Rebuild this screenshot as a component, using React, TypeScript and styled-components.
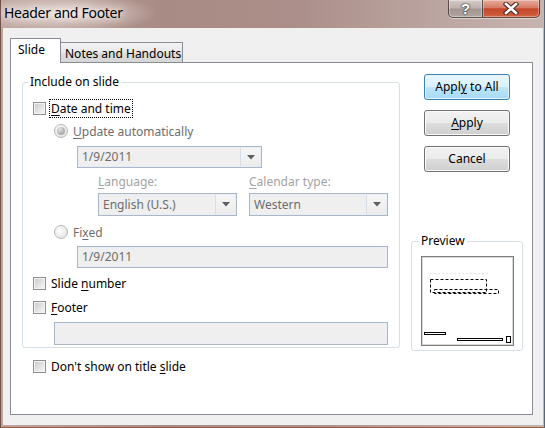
import React from 'react'
import styled, { createGlobalStyle } from 'styled-components'

const GlobalStyle = createGlobalStyle`
  html, body {
    margin: 0;
    padding: 0;
  }
  body {
    background: #fff;
    font-family: "Noto Sans", "Liberation Sans", sans-serif;
    font-size: 12px;
    color: #000;
  }
`

const Window = styled.div`
  width: 545px;
  height: 428px;
  box-sizing: border-box;
  display: flex;
  flex-direction: column;
  padding: 0 2px 3px 3px;
  overflow: hidden;
  background:
    radial-gradient(ellipse 95px 20px at 62px 13px, rgba(238, 228, 224, 0.95), rgba(238, 228, 224, 0)),
    linear-gradient(90deg, #bda49e 0%, #a98b85 30%, #ac8f8a 55%, #bba5a0 80%, #c6b4b0 100%);
  box-shadow: inset 1px 0 #6f5046, inset -1px 0 #566877, inset 0 -1px #9a5a3c;
`

const TitleBar = styled.div`
  height: 28px;
  display: flex;
  justify-content: space-between;
  align-items: flex-start;
  flex-shrink: 0;
`

const Title = styled.div`
  padding: 3px 0 0 1px;
  font-size: 14px;
  line-height: 20px;
  letter-spacing: -0.3px;
  color: #000;
  text-shadow: 0 0 6px rgba(255, 255, 255, 0.9), 0 0 10px rgba(255, 255, 255, 0.7);
`

const CaptionButtons = styled.div`
  display: flex;
  margin-right: 3px;
  border-radius: 0 0 5px 5px;
  box-shadow: 0 1px 0 rgba(255, 255, 255, 0.45);
`

const CaptionButton = styled.div<{ $close?: boolean }>`
  height: 18px;
  width: ${p => (p.$close ? 57 : 35)}px;
  box-sizing: border-box;
  display: flex;
  align-items: center;
  justify-content: center;
  border: 1px solid rgba(58, 40, 38, 0.75);
  border-top: none;
  border-left: ${p => (p.$close ? 'none' : '1px solid rgba(58, 40, 38, 0.75)')};
  border-radius: ${p => (p.$close ? '0 0 5px 0' : '0 0 0 5px')};
  background: ${p =>
    p.$close
      ? 'linear-gradient(#e8ab9b 0%, #d47c66 45%, #c4462c 52%, #d2613f 100%)'
      : 'linear-gradient(#d6cbc8 0%, #bdb0ad 48%, #a39592 52%, #b0a5a2 100%)'};
  box-shadow: inset 0 0 0 1px rgba(255, 255, 255, 0.35);
`

const HelpGlyph = styled.span`
  font-family: "Liberation Sans", sans-serif;
  font-weight: bold;
  font-size: 15px;
  line-height: 16px;
  color: #fff;
  text-shadow: 0 0 1px #333, 0 0 1px #333, 0 0 2px #444;
`

const Client = styled.div`
  flex: 1;
  display: flex;
  flex-direction: column;
  background: #f0f0f0;
  padding: 10px 10px 10px 7px;
`

const TabRow = styled.div`
  display: flex;
  align-items: flex-end;
  height: 24px;
  flex-shrink: 0;
`

const Tab = styled.div<{ $active?: boolean }>`
  box-sizing: border-box;
  border: 1px solid #898c95;
  border-bottom: none;
  line-height: 16px;
  white-space: nowrap;
  overflow: hidden;
  ${p =>
    p.$active
      ? `
    width: 51px;
    height: 25px;
    margin-bottom: -1px;
    padding: 3px 0 0 7px;
    background: #fff;
    position: relative;
    z-index: 1;
  `
      : `
    width: 122px;
    height: 20px;
    border-left: none;
    padding: 3px 0 0 4px;
    background: linear-gradient(#f3f3f3, #e8e8e8 50%, #dddddd 51%, #d6d6d6);
  `}
`

const Panel = styled.div`
  flex: 1;
  display: grid;
  grid-template-columns: 378px 112px;
  column-gap: 11px;
  align-items: start;
  background: #fff;
  border: 1px solid #898c95;
  padding: 11px 0 0 11px;
`

const LeftColumn = styled.div`
  display: flex;
  flex-direction: column;
`

const RightColumn = styled.div`
  display: flex;
  flex-direction: column;
`

const Group = styled.fieldset<{ $pad: string }>`
  margin: 0;
  min-width: 0;
  box-sizing: border-box;
  border: 1px solid #d5dfe5;
  border-radius: 3px;
  padding: ${p => p.$pad};
  display: flex;
  flex-direction: column;
`

const Legend = styled.legend<{ $shift: number }>`
  padding: 0 2px;
  margin-left: ${p => p.$shift}px;
  line-height: 16px;
  color: #000;
`

const Row = styled.div<{ $mt?: number; $indent?: number; $h?: number }>`
  display: flex;
  align-items: center;
  height: ${p => (p.$h ? `${p.$h}px` : 'auto')};
  margin-top: ${p => p.$mt ?? 0}px;
  padding-left: ${p => p.$indent ?? 0}px;
`

const CheckBox = styled.span`
  width: 13px;
  height: 13px;
  box-sizing: border-box;
  flex-shrink: 0;
  border: 1px solid #8e8f8f;
  background: linear-gradient(135deg, #c4c6c8 0%, #dedfe0 45%, #f7f7f7 100%);
  box-shadow: inset 0 0 0 1px #f4f4f4;
`

const Radio = styled.span<{ $checked?: boolean }>`
  width: 14px;
  height: 14px;
  box-sizing: border-box;
  flex-shrink: 0;
  border-radius: 50%;
  border: 1px solid #b7b7b7;
  display: flex;
  align-items: center;
  justify-content: center;
  background: radial-gradient(circle at 40% 35%, #ffffff 0%, #eaeaea 60%, #dcdcdc 100%);

  &::after {
    content: '';
    display: ${p => (p.$checked ? 'block' : 'none')};
    width: 8px;
    height: 8px;
    border-radius: 50%;
    background: radial-gradient(circle at 35% 30%, #e2e2e2 0%, #b4b4b4 55%, #9c9c9c 100%);
  }
`

const Label = styled.span<{ $tone?: 'normal' | 'disabled' | 'faint'; $focus?: boolean; $gap?: number }>`
  margin-left: ${p => p.$gap ?? 3}px;
  padding: 0 1px;
  line-height: 17px;
  white-space: nowrap;
  border: 1px ${p => (p.$focus ? 'dotted #000' : 'solid transparent')};
  color: ${p => (p.$tone === 'disabled' ? '#6d6d6d' : p.$tone === 'faint' ? '#a2a2a2' : '#000')};
`

const Key = styled.u`
  text-decoration: underline;
  text-underline-offset: 2px;
`

const FieldBox = styled.div<{ $w: number; $h: number }>`
  width: ${p => p.$w}px;
  height: ${p => p.$h}px;
  box-sizing: border-box;
  display: flex;
  align-items: center;
  border: 1px solid #a9b7c9;
  box-shadow: inset 0 0 0 1px #e9eef4;
  background: #efefef;
  color: #6d6d6d;
  line-height: 16px;
`

const FieldText = styled.span`
  flex: 1;
  padding-left: 4px;
  white-space: nowrap;
`

const DropButton = styled.span`
  width: 20px;
  align-self: stretch;
  margin: 1px 1px 1px 0;
  box-sizing: border-box;
  display: flex;
  align-items: center;
  justify-content: center;
  border-left: 1px solid #d6dde6;
  background: linear-gradient(#f6f6f6, #ececec);
`

const CaptionPair = styled.div`
  display: flex;
  gap: 12px;
`

const FieldCaption = styled.span`
  width: 139px;
  line-height: 16px;
  color: #a2a2a2;
`

const ButtonStack = styled.div`
  display: flex;
  flex-direction: column;
  gap: 10px;
  padding-left: 13px;
`

const PushButton = styled.div<{ $default?: boolean }>`
  width: 86px;
  height: 26px;
  box-sizing: border-box;
  display: flex;
  align-items: center;
  justify-content: center;
  border-radius: 3px;
  border: 1px solid ${p => (p.$default ? '#3c7fb1' : '#707070')};
  box-shadow: inset 0 0 0 1px ${p => (p.$default ? '#e5f6ff' : '#fbfbfb')};
  background: ${p =>
    p.$default
      ? 'linear-gradient(#eaf6fd 0%, #d9f0fc 50%, #bee6fd 51%, #a7d9f5 100%)'
      : 'linear-gradient(#f2f2f2 0%, #ebebeb 50%, #dddddd 51%, #cfcfcf 100%)'};
  line-height: 16px;
`

const PreviewBox = styled.div`
  margin-top: 7px;
  width: 93px;
  height: 90px;
  box-sizing: border-box;
  border: 1px solid #7c7c7c;
  box-shadow: inset 0 0 0 1px #d8d8d8;
  background: #fff;
  display: flex;
`

const Arrow = () => (
  <svg width="8" height="5" viewBox="0 0 8 5">
    <polygon points="0,0 8,0 4,4.5" fill="#5f5f5f" />
  </svg>
)

const CloseGlyph = () => (
  <svg width="16" height="13" viewBox="0 0 16 13">
    <path d="M3 2 L13 11 M13 2 L3 11" stroke="#4a2a22" strokeWidth="4.6" strokeLinecap="square" />
    <path d="M3 2 L13 11 M13 2 L3 11" stroke="#fff" strokeWidth="2.6" strokeLinecap="square" />
  </svg>
)

const SlideThumb = () => (
  <svg width="91" height="88" viewBox="0 0 91 88">
    <line x1="8" y1="16.5" x2="66" y2="16.5" stroke="#e4e4e4" strokeDasharray="2 2" />
    <rect x="8.5" y="22.5" width="56" height="13" fill="none" stroke="#000" strokeDasharray="3 2" />
    <rect x="12.5" y="32.5" width="64" height="4" fill="none" stroke="#000" strokeDasharray="3 2" />
    <rect x="2.5" y="75.5" width="21" height="2" fill="none" stroke="#000" />
    <rect x="35.5" y="81.5" width="45" height="2" fill="none" stroke="#000" />
    <rect x="84.5" y="79.5" width="4" height="6" fill="none" stroke="#000" />
  </svg>
)

interface ComboProps {
  value: string
  width: number
  height: number
}

const Combo: React.FC<ComboProps> = ({ value, width, height }) => (
  <FieldBox $w={width} $h={height}>
    <FieldText>{value}</FieldText>
    <DropButton>
      <Arrow />
    </DropButton>
  </FieldBox>
)

const App: React.FC = () => {
  return (
    <>
      <GlobalStyle />
      <Window>
        <TitleBar>
          <Title>Header and Footer</Title>
          <CaptionButtons>
            <CaptionButton>
              <HelpGlyph>?</HelpGlyph>
            </CaptionButton>
            <CaptionButton $close>
              <CloseGlyph />
            </CaptionButton>
          </CaptionButtons>
        </TitleBar>

        <Client>
          <TabRow>
            <Tab $active>Slide</Tab>
            <Tab>Notes and Handouts</Tab>
          </TabRow>

          <Panel>
            <LeftColumn>
              <Group $pad="0 10px 2px 10px">
                <Legend $shift={-5}>Include on slide</Legend>

                <Row $mt={8} $h={20}>
                  <CheckBox />
                  <Label $focus>
                    <Key>D</Key>ate and time
                  </Label>
                </Row>

                <Row $mt={3} $h={20} $indent={21}>
                  <Radio $checked />
                  <Label $tone="disabled">
                    <Key>U</Key>pdate automatically
                  </Label>
                </Row>

                <Row $mt={5} $indent={44}>
                  <Combo value="1/9/2011" width={185} height={22} />
                </Row>

                <Row $mt={6} $indent={65}>
                  <CaptionPair>
                    <FieldCaption>
                      <Key>L</Key>anguage:
                    </FieldCaption>
                    <FieldCaption>
                      <Key>C</Key>alendar type:
                    </FieldCaption>
                  </CaptionPair>
                </Row>

                <Row $mt={3} $indent={65}>
                  <CaptionPair>
                    <Combo value="English (U.S.)" width={139} height={23} />
                    <Combo value="Western" width={139} height={23} />
                  </CaptionPair>
                </Row>

                <Row $mt={6} $h={20} $indent={21}>
                  <Radio />
                  <Label $tone="disabled">
                    Fi<Key>x</Key>ed
                  </Label>
                </Row>

                <Row $mt={4} $indent={44}>
                  <FieldBox $w={311} $h={22}>
                    <FieldText>1/9/2011</FieldText>
                  </FieldBox>
                </Row>

                <Row $mt={5} $h={20}>
                  <CheckBox />
                  <Label>
                    Slide <Key>n</Key>umber
                  </Label>
                </Row>

                <Row $mt={4} $h={20}>
                  <CheckBox />
                  <Label>
                    <Key>F</Key>ooter
                  </Label>
                </Row>

                <Row $mt={5} $indent={21}>
                  <FieldBox $w={334} $h={23} />
                </Row>
              </Group>

              <Row $mt={8} $h={20} $indent={11}>
                <CheckBox />
                <Label>
                  Don't show on title <Key>s</Key>lide
                </Label>
              </Row>
            </LeftColumn>

            <RightColumn>
              <ButtonStack>
                <PushButton $default>
                  Appl<Key>y</Key>&nbsp;to All
                </PushButton>
                <PushButton>
                  <Key>A</Key>pply
                </PushButton>
                <PushButton>Cancel</PushButton>
              </ButtonStack>

              <Group $pad="0 8px 4px 9px" style={{ marginTop: 61 }}>
                <Legend $shift={-2}>Preview</Legend>
                <PreviewBox>
                  <SlideThumb />
                </PreviewBox>
              </Group>
            </RightColumn>
          </Panel>
        </Client>
      </Window>
    </>
  )
}

export default App
